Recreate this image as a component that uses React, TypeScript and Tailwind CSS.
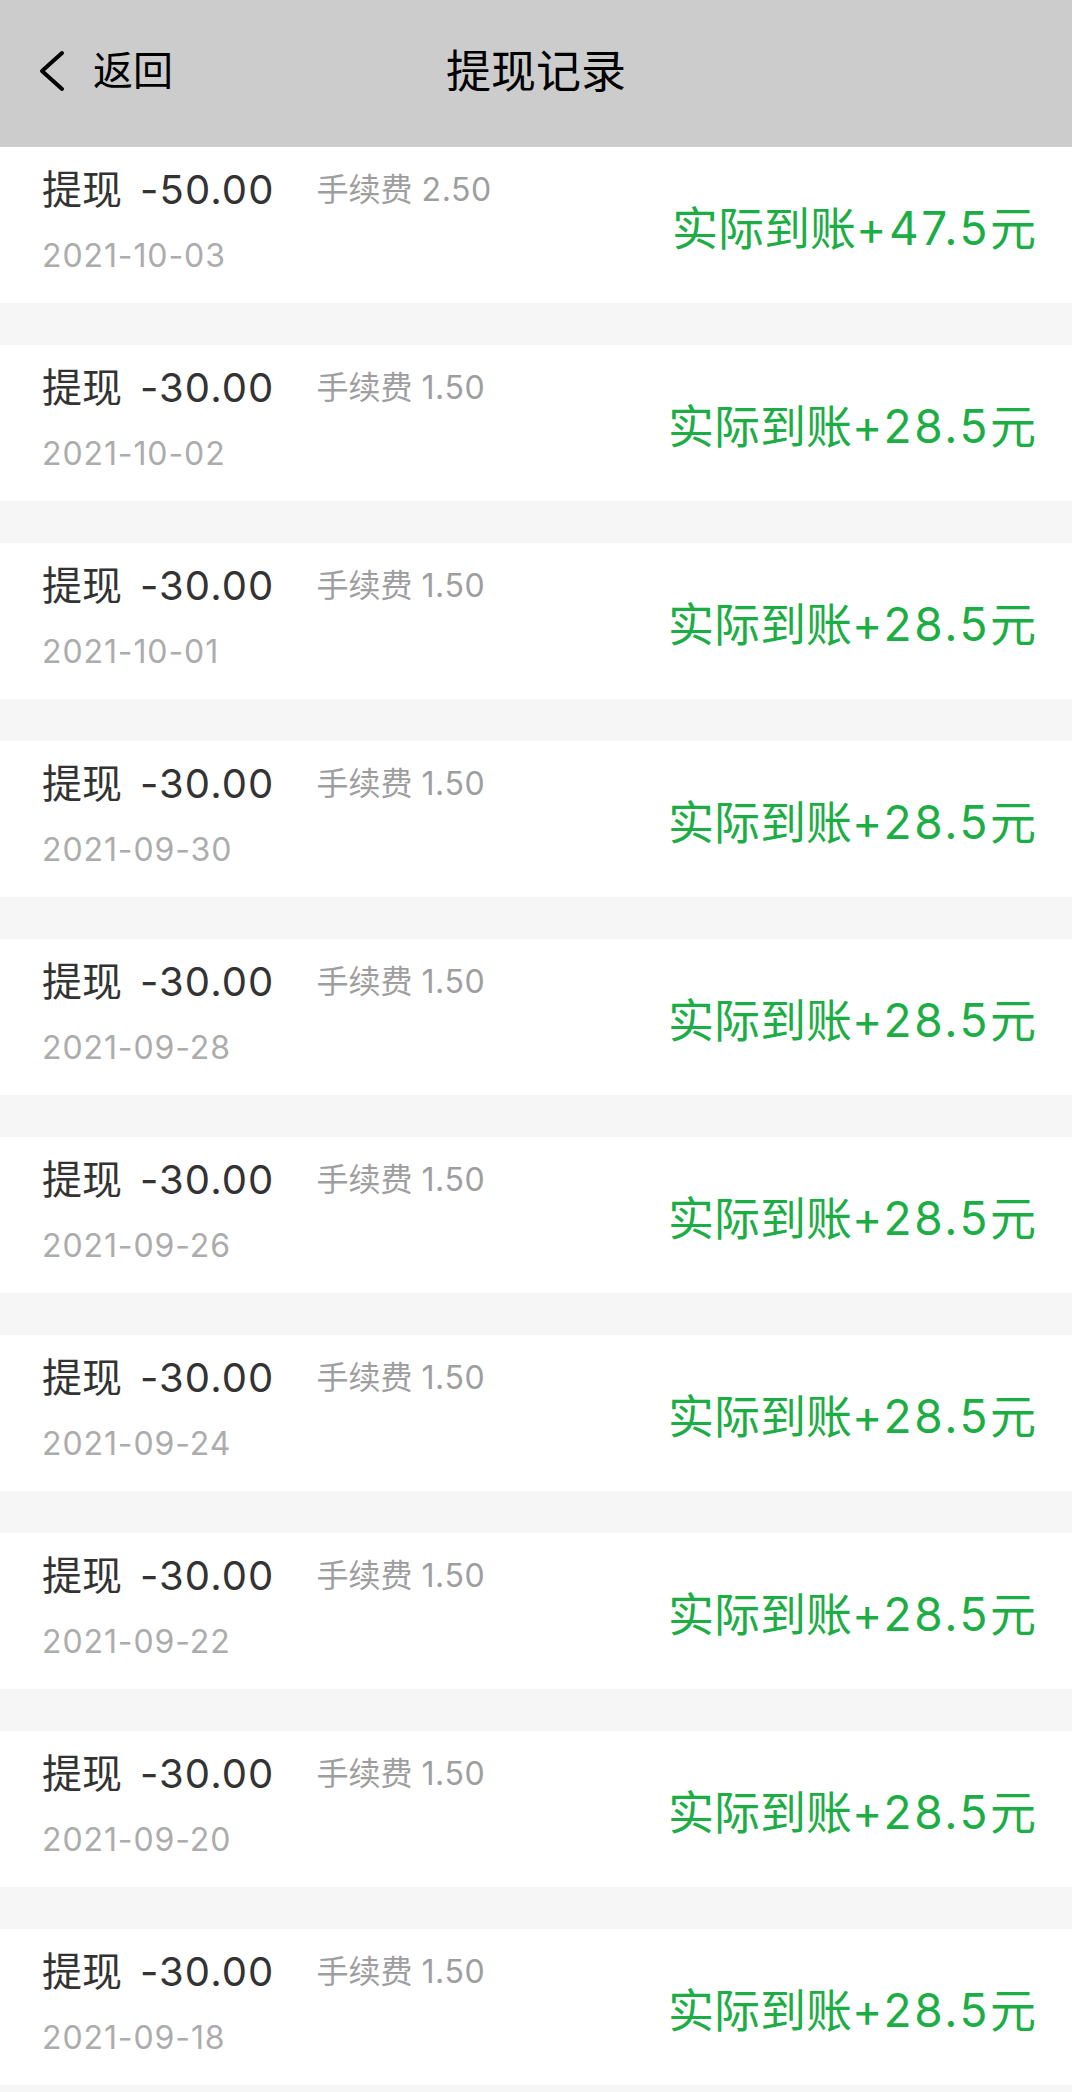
import React from "react";

const rows = [
  { amt: "-50.00", fee: "2.50", date: "2021-10-03", got: "47.5" },
  { amt: "-30.00", fee: "1.50", date: "2021-10-02", got: "28.5" },
  { amt: "-30.00", fee: "1.50", date: "2021-10-01", got: "28.5" },
  { amt: "-30.00", fee: "1.50", date: "2021-09-30", got: "28.5" },
  { amt: "-30.00", fee: "1.50", date: "2021-09-28", got: "28.5" },
  { amt: "-30.00", fee: "1.50", date: "2021-09-26", got: "28.5" },
  { amt: "-30.00", fee: "1.50", date: "2021-09-24", got: "28.5" },
  { amt: "-30.00", fee: "1.50", date: "2021-09-22", got: "28.5" },
  { amt: "-30.00", fee: "1.50", date: "2021-09-20", got: "28.5" },
  { amt: "-30.00", fee: "1.50", date: "2021-09-18", got: "28.5" },
];

export default function App() {
  return (
    <div
      className="min-h-screen w-full bg-[#f6f6f6] pb-[7px]"
      style={{ fontFamily: 'Inter, "Noto Sans CJK SC", sans-serif' }}
    >
      <header className="relative flex h-[147px] items-center bg-[#cccccc] pb-[5px]">
        <div className="flex items-center pl-[38px]">
          <svg width="28" height="42" viewBox="0 0 28 42" className="mr-[27px]">
            <polyline
              points="24,3 4,21 24,39"
              fill="none"
              stroke="#000"
              strokeWidth="4"
              strokeLinecap="round"
              strokeLinejoin="round"
            />
          </svg>
          <span className="text-[40px] leading-none text-black">返回</span>
        </div>
        <h1 className="absolute left-1/2 -translate-x-1/2 text-[45px] leading-none font-normal text-black">
          提现记录
        </h1>
      </header>
      <div className="flex flex-col gap-[42px]">
        {rows.map((r, i) => (
          <div
            key={i}
            className="flex h-[156px] items-center justify-between bg-white pl-[42px] pr-[36px]"
          >
            <div className="flex flex-col self-start pt-[23px]">
              <div className="flex items-baseline">
                <span className="text-[40px] leading-none text-[#333333]">
                  提现
                  <span className="ml-[18px] tracking-[1.1px]">{r.amt}</span>
                </span>
                <span className="relative -top-[3px] ml-[42px] text-[32px] leading-none text-[#9e9e9e]">
                  手续费 <span className="tracking-[0.6px]">{r.fee}</span>
                </span>
              </div>
              <div className="mt-[30px] text-[32px] leading-none tracking-[0.9px] text-[#acacac]">
                {r.date}
              </div>
            </div>
            <div className="relative top-[3px] text-[46px] leading-none text-[#1cad45]">
              实际到账<span className="tracking-[2.6px]">+{r.got}</span>元
            </div>
          </div>
        ))}
      </div>
    </div>
  );
}
